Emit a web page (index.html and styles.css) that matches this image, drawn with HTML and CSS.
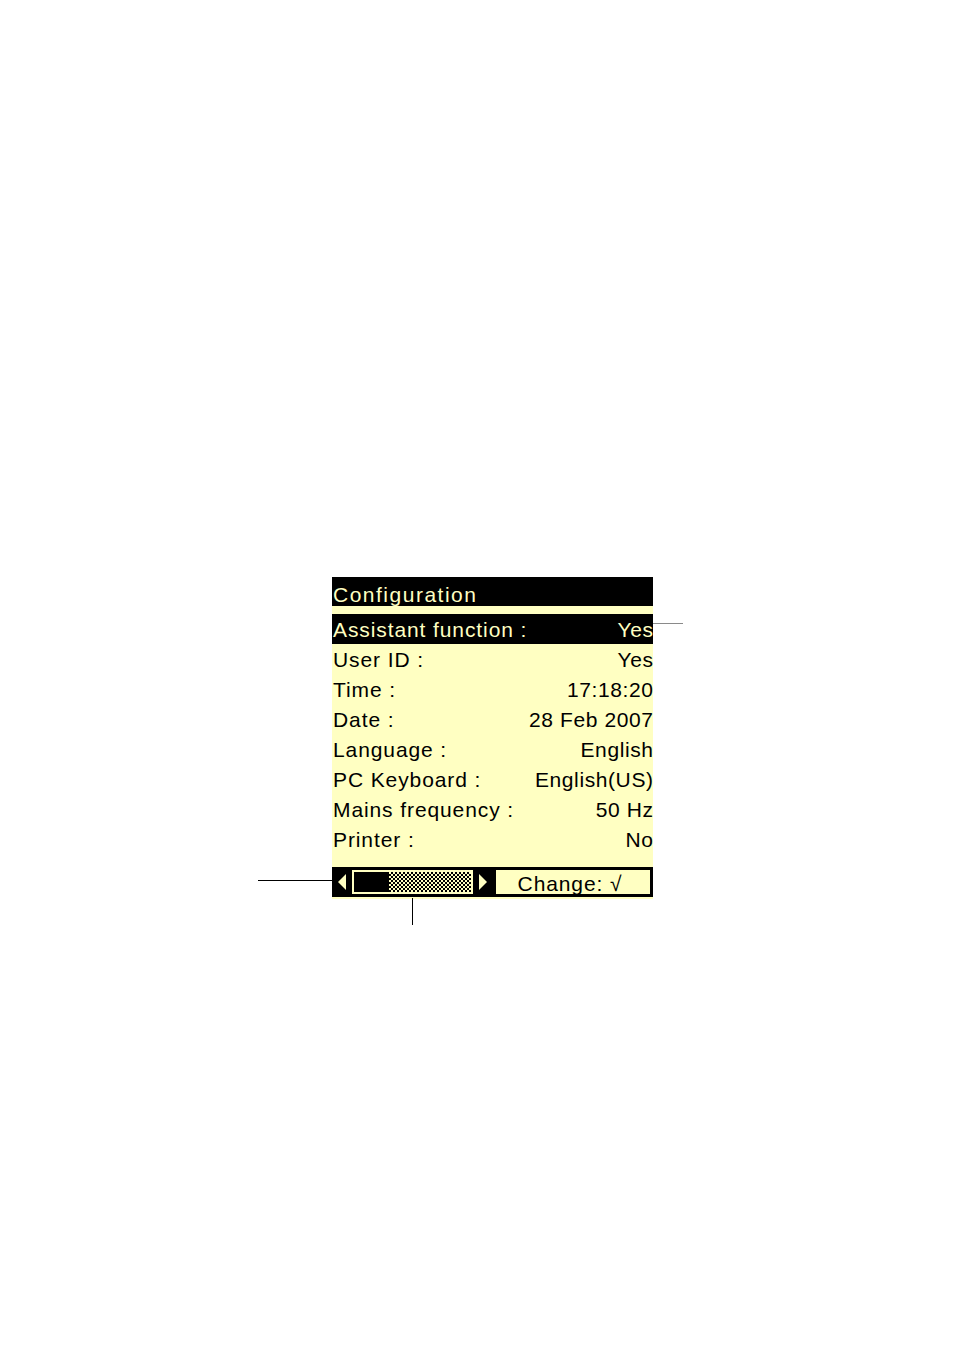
FILE: index.html
```
<!DOCTYPE html>
<html>
<head>
<meta charset="utf-8">
<link rel="stylesheet" href="styles.css">
</head>
<body>
<div class="page">
  <div class="panel">
    <div class="title">Configuration</div>
    <div class="rows">
      <div class="row sel"><span>Assistant function :</span><span>Yes</span></div>
      <div class="row"><span>User ID :</span><span>Yes</span></div>
      <div class="row"><span>Time :</span><span>17:18:20</span></div>
      <div class="row"><span>Date :</span><span>28 Feb 2007</span></div>
      <div class="row"><span>Language :</span><span>English</span></div>
      <div class="row"><span>PC Keyboard :</span><span>English(US)</span></div>
      <div class="row"><span>Mains frequency :</span><span>50 Hz</span></div>
      <div class="row"><span>Printer :</span><span>No</span></div>
    </div>
    <div class="bar">
      <svg class="arrow" width="10" height="18" viewBox="0 0 10 18"><polygon points="1,9 9,1 9,17" fill="#ffffc2"/></svg>
      <div class="frame"><div class="thumb"></div><div class="checker"></div></div>
      <svg class="arrow right" width="10" height="18" viewBox="0 0 10 18"><polygon points="9,9 1,1 1,17" fill="#ffffc2"/></svg>
      <div class="change">Change: √</div>
    </div>
    <div class="callout c-right"></div>
    <div class="callout c-left"></div>
    <div class="callout c-down"></div>
  </div>
</div>
</body>
</html>
```
FILE: styles.css
```
html, body {
  margin: 0;
  background: #ffffff;
}
.page {
  width: 954px;
  height: 1351px;
  box-sizing: border-box;
  padding: 577px 0 0 332px;
}
.panel {
  position: relative;
  width: 321px;
  background: #ffffc2;
  padding-bottom: 2px;
  font-family: "Liberation Sans", Arial, sans-serif;
  font-size: 21px;
  letter-spacing: 0.9px;
  color: #000;
}
.title {
  height: 29px;
  box-sizing: border-box;
  padding: 6px 0 0 1px;
  line-height: 23px;
  letter-spacing: 1.5px;
  background: #000;
  color: #ffffc2;
  white-space: nowrap;
}
.rows {
  margin-top: 8px;
}
.row {
  display: flex;
  justify-content: space-between;
  height: 30px;
  box-sizing: border-box;
  padding: 2px 0 0 1px;
  line-height: 28px;
  white-space: nowrap;
}
.row span:last-child {
  letter-spacing: 0.6px;
  margin-right: -0.6px;
}
.row.sel {
  background: #000;
  color: #ffffc2;
}
.bar {
  margin-top: 13px;
  height: 30px;
  background: #000;
  display: flex;
  align-items: center;
  padding: 0 3px 0 5px;
}
.arrow {
  display: block;
  flex: none;
}
.frame {
  flex: none;
  width: 121px;
  height: 24px;
  margin-left: 5px;
  box-sizing: border-box;
  border: 2px solid #ffffc2;
  display: flex;
  margin-right: 5px;
}
.thumb {
  width: 35px;
  background: #000;
}
.checker {
  flex: 1;
  background-color: #ffffc2;
  background-image: repeating-conic-gradient(#000 0 25%, transparent 0 50%);
  background-size: 4px 4px;
}
.change {
  flex: 1;
  margin-left: 8px;
  height: 24px;
  background: #ffffc2;
  color: #000;
  text-align: center;
  line-height: 27px;
  padding-right: 6px;
  white-space: nowrap;
}
.callout {
  position: absolute;
}
.c-right {
  left: 321px;
  top: 46px;
  width: 30px;
  height: 1px;
  background: #8a8a8a;
}
.c-left {
  left: -74px;
  top: 303px;
  width: 74px;
  height: 1px;
  background: #000;
}
.c-down {
  left: 80px;
  top: 321px;
  width: 1px;
  height: 27px;
  background: #000;
}
```
